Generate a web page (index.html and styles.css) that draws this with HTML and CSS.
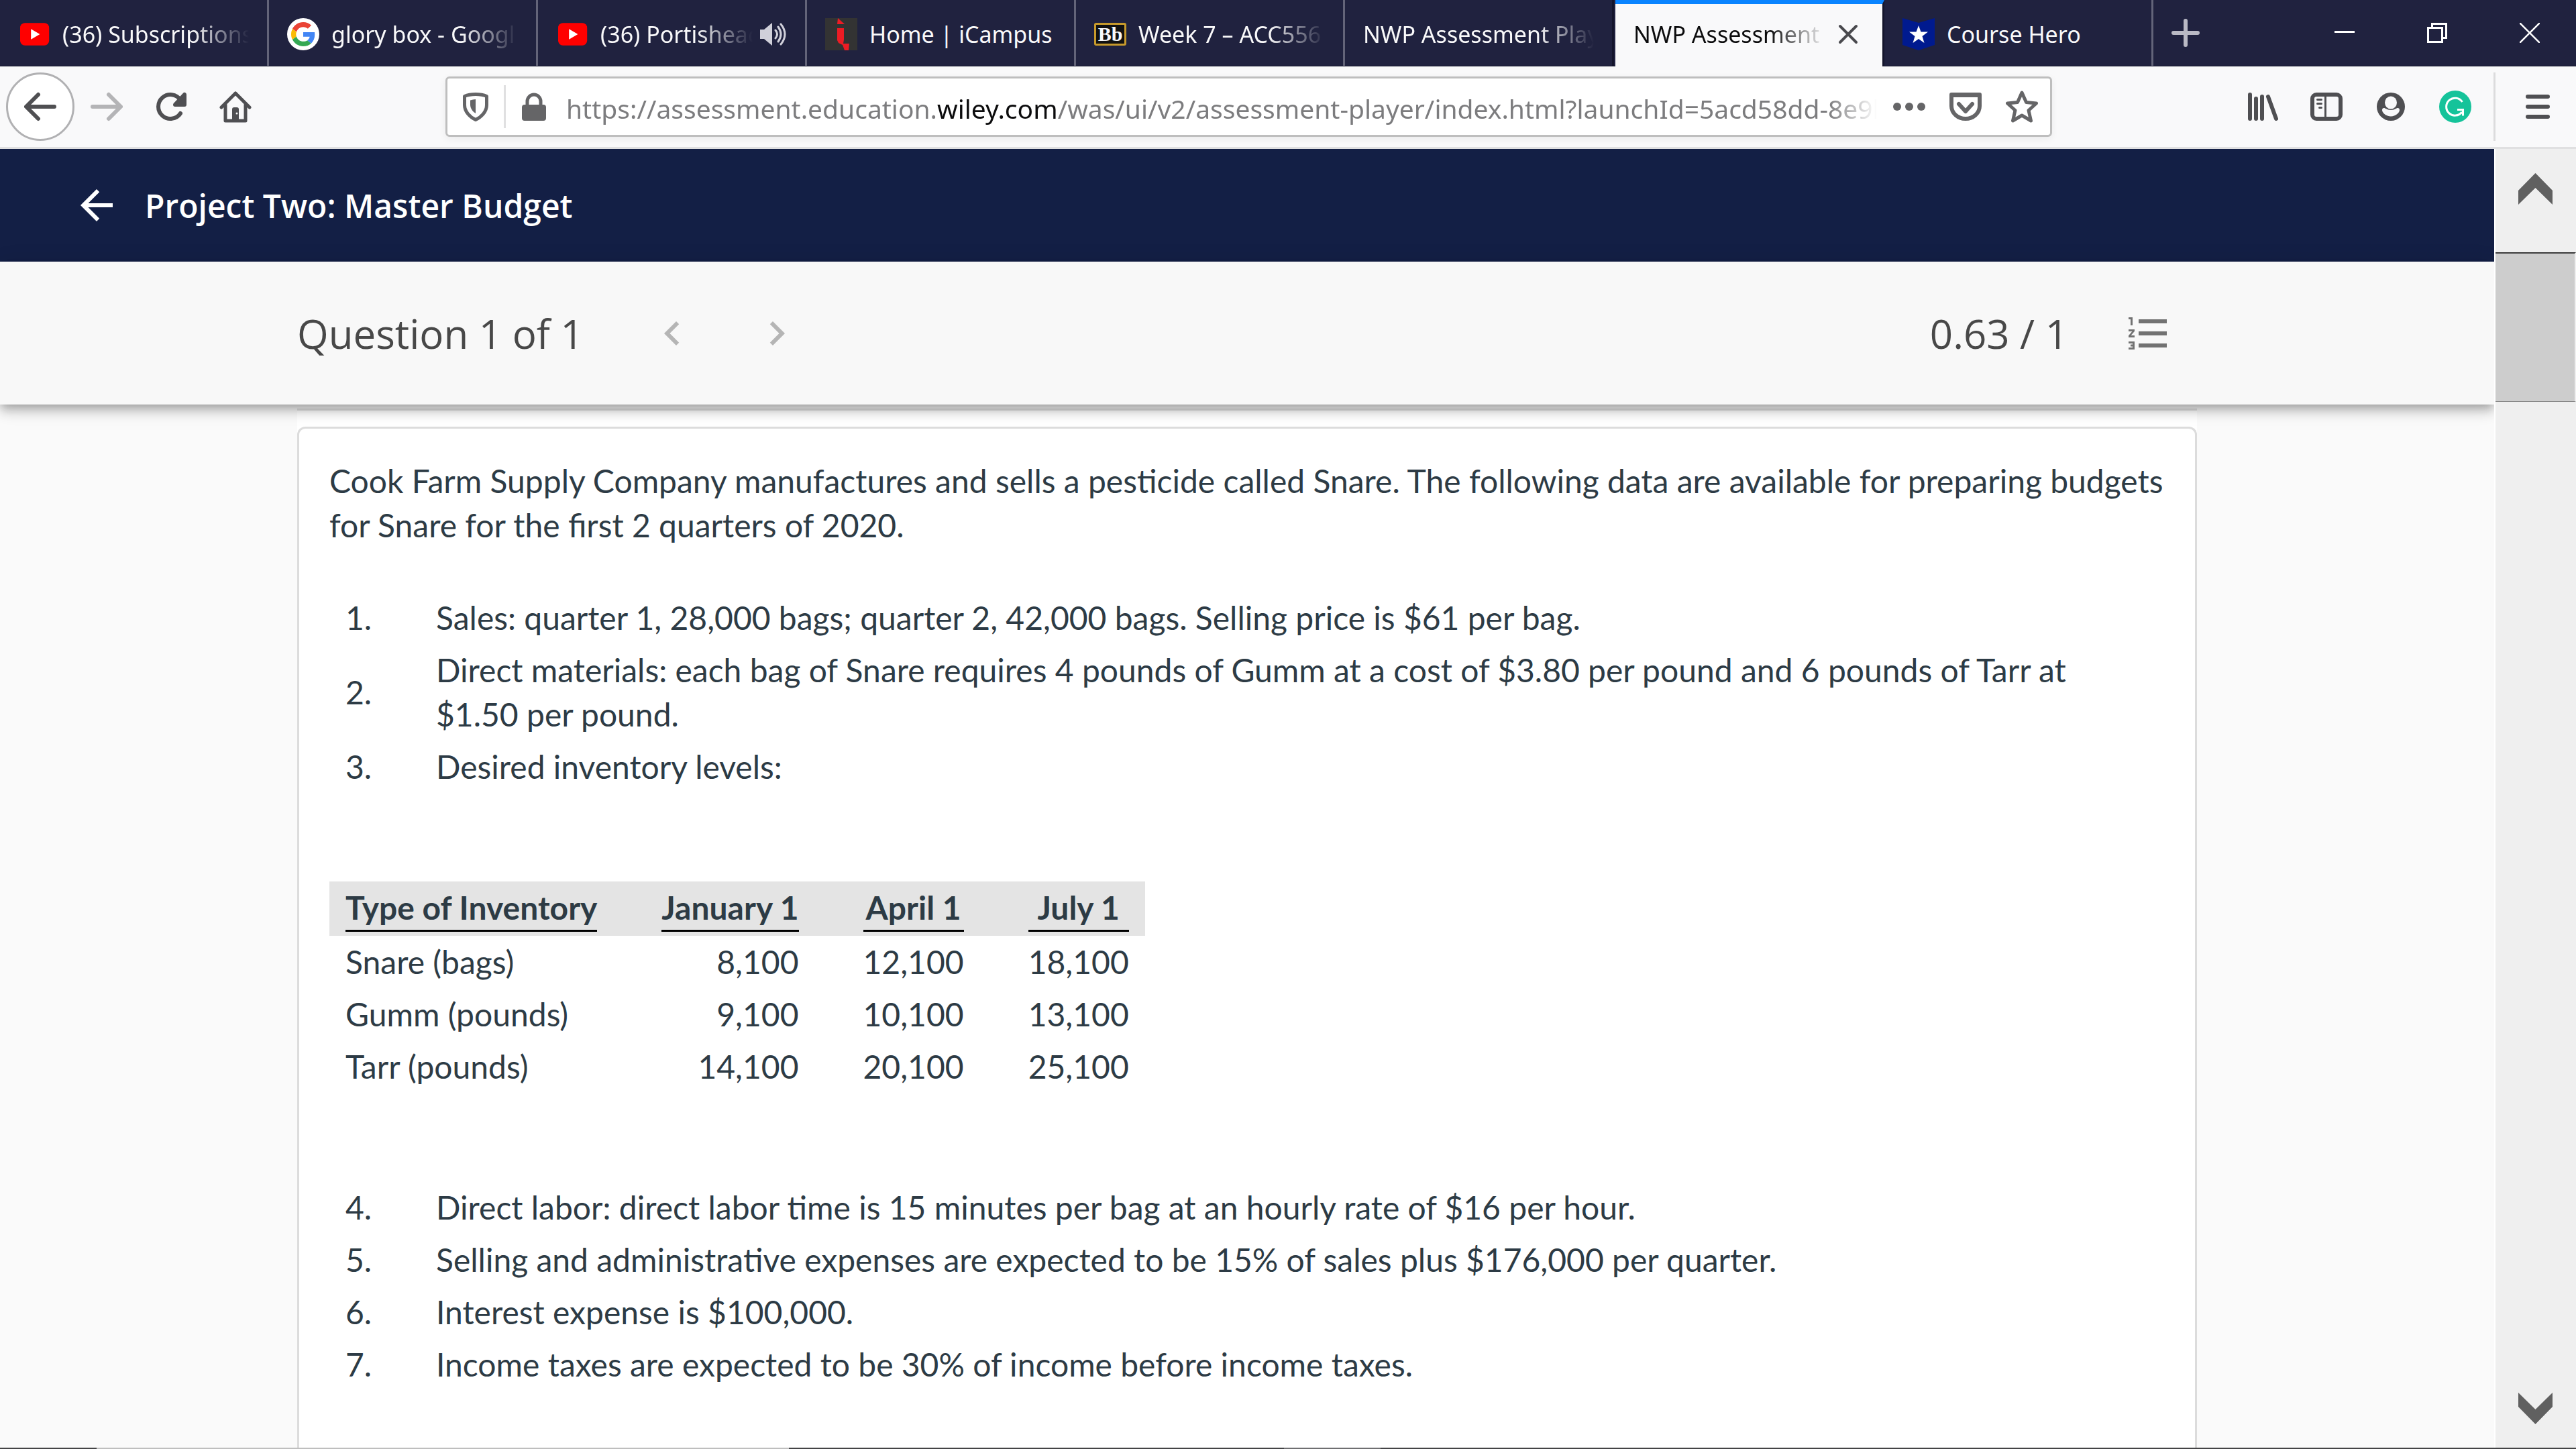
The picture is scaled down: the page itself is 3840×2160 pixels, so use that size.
FILE: index.html
```html
<!DOCTYPE html>
<html lang="en">
<head>
<meta charset="utf-8">
<title>NWP Assessment Player</title>
<meta name="viewport" content="width=device-width, initial-scale=1">
<link rel="stylesheet" href="styles.css">
</head>
<body>
<div class="window">
  <div class="tabstrip">
    <div class="tab">
      <button class="tab-select" type="button">
        <svg class="favicon" viewBox="0 0 16 16" aria-hidden="true"><rect x="1" y="2.4" width="14.4" height="11.2" rx="2.4" fill="#f00"/><path d="M6.4 5.4v5.2L10.8 8z" fill="#fff"/></svg>
        <span class="tab-label">(36) Subscriptions</span>
      </button>
    </div>
    <div class="tab">
      <button class="tab-select" type="button">
        <svg class="favicon" viewBox="0 0 48 48" aria-hidden="true"><circle cx="24" cy="24" r="24" fill="#fff"/><g transform="translate(6 6) scale(.75)"><path fill="#EA4335" d="M24 9.5c3.54 0 6.71 1.22 9.21 3.6l6.85-6.85C35.9 2.38 30.47 0 24 0 14.62 0 6.51 5.38 2.56 13.22l7.98 6.19C12.43 13.72 17.74 9.5 24 9.5z"/><path fill="#4285F4" d="M46.98 24.55c0-1.57-.15-3.09-.38-4.55H24v9.02h12.94c-.58 2.96-2.26 5.48-4.78 7.18l7.73 6c4.51-4.18 7.09-10.36 7.09-17.65z"/><path fill="#FBBC05" d="M10.53 28.59c-.48-1.45-.76-2.99-.76-4.59s.27-3.14.76-4.59l-7.98-6.19C.92 16.46 0 20.12 0 24c0 3.88.92 7.54 2.56 10.78l7.97-6.19z"/><path fill="#34A853" d="M24 48c6.48 0 11.93-2.13 15.89-5.81l-7.73-6c-2.15 1.45-4.92 2.3-8.16 2.3-6.26 0-11.57-4.22-13.47-9.91l-7.98 6.19C6.51 42.62 14.62 48 24 48z"/></g></svg>
        <span class="tab-label">glory box - Googl</span>
      </button>
    </div>
    <div class="tab">
      <button class="tab-select" type="button">
        <svg class="favicon" viewBox="0 0 16 16" aria-hidden="true"><rect x="1" y="2.4" width="14.4" height="11.2" rx="2.4" fill="#f00"/><path d="M6.4 5.4v5.2L10.8 8z" fill="#fff"/></svg>
        <span class="tab-label">(36) Portishead</span>
      </button>
      <button class="tab-sound" type="button" aria-label="Mute tab"><svg class="icon-sound" viewBox="0 0 42 36" fill="none" stroke="#d0d0da" stroke-width="3" stroke-linecap="round"><path d="M2 11h6L20 1v34L8 25H2z" fill="#d0d0da" stroke="none"/><path d="M25 12q5 6 0 12M29 7q8 11 0 22M33 3q12 15 0 30"/></svg></button>
    </div>
    <div class="tab">
      <button class="tab-select" type="button">
        <svg class="favicon" viewBox="0 0 48 48" aria-hidden="true"><path fill="#333" d="M0 0h48v48H0z"/><path fill="#ed1c24" d="M19 0l10 9H18zM18 15h10v17l-1 6h9l-1 10h-6l-3-8-6-3-2-4z"/></svg>
        <span class="tab-label tab-label-full">Home | iCampus</span>
      </button>
    </div>
    <div class="tab">
      <button class="tab-select" type="button">
        <span class="favicon favicon-bb">Bb</span>
        <span class="tab-label">Week 7 – ACC556</span>
      </button>
    </div>
    <div class="tab tab-last-before">
      <button class="tab-select" type="button"><span class="tab-label">NWP Assessment Play</span></button>
    </div>
    <div class="tab tab-active">
      <button class="tab-select" type="button"><span class="tab-label">NWP Assessment</span></button>
      <button class="tab-close" type="button" aria-label="Close tab"><svg class="icon-close" viewBox="0 0 30 30" stroke="#4a4a4e" stroke-width="4" stroke-linecap="round"><path d="M3 3l24 24M27 3L3 27"/></svg></button>
    </div>
    <div class="tab">
      <button class="tab-select" type="button">
        <svg class="favicon" viewBox="0 0 48 48" aria-hidden="true"><path fill="#001a8f" d="M0 0l24 7 24-7v40l-24 8-24-8z"/><path fill="#fff" d="M24 11l3.500 9.500H38l-8.500 6.500 3 10-8.500-6-8.500 6 3-10L10 20.500h10.500z"/></svg>
        <span class="tab-label tab-label-full">Course Hero</span>
      </button>
    </div>
    <button class="new-tab" type="button" aria-label="New tab"><svg class="icon-plus" viewBox="0 0 42 42" stroke="#b9b9c4" stroke-width="6" stroke-linecap="round"><path d="M21 3v36M3 21h36"/></svg></button>
    <div class="window-controls">
      <button type="button" aria-label="Minimize"><svg viewBox="0 0 30 30"><path fill="#fff" d="M0 12h30v3H0z"/></svg></button>
      <button type="button" aria-label="Restore"><svg viewBox="0 0 30 30" fill="none" stroke="#fff" stroke-width="3"><path d="M1.500 7.500h21v21h-21zM7.500 7V1.500h21v21H23"/></svg></button>
      <button type="button" aria-label="Close"><svg viewBox="0 0 30 30" stroke="#fff" stroke-width="2.500"><path d="M0 0l30 30M30 0L0 30"/></svg></button>
    </div>
  </div>

  <div class="toolbar">
    <div class="nav-buttons">
      <button class="nav-back" type="button" aria-label="Back"><svg class="icon" viewBox="0 0 48 48" fill="none" stroke="#4f4f52" stroke-width="6" stroke-linecap="round" stroke-linejoin="round"><path d="M45 24H4M21 6L3 24l18 18"/></svg></button>
      <button type="button" aria-label="Forward"><svg class="icon" viewBox="0 0 48 48" fill="none" stroke="#b4b4b6" stroke-width="6" stroke-linecap="round" stroke-linejoin="round"><path d="M3 24h41M27 6l18 18-18 18"/></svg></button>
      <button type="button" aria-label="Reload"><svg class="icon" viewBox="0 0 48 48" fill="none" stroke="#4f4f52" stroke-width="6" stroke-linecap="round"><path d="M38 34A18 18 0 1 1 38 14"/><path d="M44 6v15H30z" fill="#4f4f52" stroke-linejoin="round"/></svg></button>
      <button type="button" aria-label="Home"><svg class="icon" viewBox="0 0 48 48" fill="none" stroke="#4f4f52" stroke-width="5" stroke-linecap="round" stroke-linejoin="round"><path d="M3 25L24 4l21 21M9 21v24h30V21"/><path d="M19 45V28q0-3 3-3h4q3 0 3 3v17z" fill="#4f4f52" stroke="none"/><circle cx="26" cy="34" r="1.500" fill="#f9f9fa" stroke="none"/></svg></button>
    </div>
    <div class="urlbar">
      <button class="url-icon" type="button" aria-label="Tracking protection"><svg class="icon" viewBox="0 0 48 48" fill="none" stroke="#656567" stroke-width="5"><path d="M24 5.500c6 0 12 1 16.500 3v13c0 10-8 18-16.500 22C15.500 39.500 7.500 31.500 7.500 21.500v-13c4.500-2 10.500-3 16.500-3z" stroke-linejoin="round"/><path d="M24 13v21c-5-3-8-8-8-13v-6.500q4-1.500 8-1.500z" fill="#656567" stroke="none"/></svg></button>
      <span class="url-divider"></span>
      <button class="url-icon" type="button" aria-label="Site information"><svg class="icon" viewBox="0 0 48 48"><rect x="6" y="21" width="36" height="24" rx="4" fill="#656567"/><path d="M14 24v-8a10 10 0 0 1 20 0v8" fill="none" stroke="#656567" stroke-width="5"/></svg></button>
      <div class="url-text" role="textbox" aria-label="Address" tabindex="0">https://assessment.education.<span class="url-domain">wiley.com</span>/was/ui/v2/assessment-player/index.html?launchId=5acd58dd-8e9b</div>
      <div class="url-actions">
        <button type="button" aria-label="Page actions"><svg class="icon" viewBox="0 0 48 48" fill="#656567"><circle cx="6" cy="24" r="6"/><circle cx="24" cy="24" r="6"/><circle cx="42" cy="24" r="6"/></svg></button>
        <button type="button" aria-label="Save to Pocket"><svg class="icon" viewBox="0 0 48 48" fill="none" stroke="#656567" stroke-width="6" stroke-linecap="round" stroke-linejoin="round"><path d="M3 6h42v17a21 19 0 0 1-42 0zM3 7h42"/><path d="M14 20l10 11 10-11"/></svg></button>
        <button type="button" aria-label="Bookmark"><svg class="icon" viewBox="0 0 48 48" fill="none" stroke="#656567" stroke-width="5" stroke-linejoin="round"><path d="M24 3l6.500 14.500L45.500 19 34 29.500 37.500 45 24 37 10.500 45 14 29.500 2.500 19l15-1.500z"/></svg></button>
      </div>
    </div>
    <div class="tool-buttons">
      <button type="button" aria-label="Library"><svg class="icon" viewBox="0 0 48 48" stroke="#4f4f52" stroke-width="6" stroke-linecap="round"><path d="M6 6v36M15 12v30M24 9v33M33 9l12 33"/></svg></button>
      <button type="button" aria-label="Sidebars"><svg class="icon" viewBox="0 0 48 48" fill="none" stroke="#4f4f52" stroke-width="6" stroke-linejoin="round"><rect x="3" y="6" width="42" height="36" rx="6"/><path d="M22.500 6v36" stroke-width="3"/><path d="M10.500 13.500h6M10.500 19.500h6M13.500 25.500h3" stroke-width="3" stroke-linecap="round"/></svg></button>
      <button type="button" aria-label="Account"><svg class="icon" viewBox="0 0 48 48"><circle cx="24" cy="24" r="21" fill="#4f4f52"/><ellipse cx="24" cy="18" rx="9" ry="9.500" fill="#f9f9fa"/><path fill="#f9f9fa" d="M11 29c0-2.500 2-3.500 4.500-2.500q8.500 5 17 0c2.500-1 4.500 0 4.500 2.500 0 4-6 9.500-13 9.500S11 33 11 29z"/></svg></button>
      <button type="button" aria-label="Grammarly"><svg class="icon" viewBox="0 0 48 48"><circle cx="24" cy="24" r="24" fill="#15c39a"/><path d="M34.500 17A13 13 0 1 0 34 32M27 28.500h8.500v9" fill="none" stroke="#fff" stroke-width="3"/></svg></button>
    </div>
    <button class="menu-button" type="button" aria-label="Open menu"><svg class="icon" viewBox="0 0 48 48" stroke="#4f4f52" stroke-width="6" stroke-linecap="round"><path d="M9 9h30M9 24h30M9 39h30"/></svg></button>
  </div>

  <div class="viewport">
    <div class="page">
      <header class="app-header">
        <a class="back-link" href="#" aria-label="Back to assignments"><svg class="icon-md" viewBox="0 0 24 24" fill="#fff"><path d="M20 11H7.830l5.590-5.590L12 4l-8 8 8 8 1.410-1.410L7.830 13H20z"/></svg></a>
        <h1>Project Two: Master Budget</h1>
      </header>
      <div class="question-bar">
        <div class="question-inner">
          <h2>Question 1 of 1</h2>
          <div class="pager">
            <button type="button" aria-label="Previous question"><svg class="icon-md" viewBox="0 0 24 24" fill="#b5b5b5"><path d="M15.410 7.410L14 6l-6 6 6 6 1.410-1.410L10.830 12z"/></svg></button>
            <button type="button" aria-label="Next question"><svg class="icon-md" viewBox="0 0 24 24" fill="#b5b5b5"><path d="M10 6L8.590 7.410 13.170 12l-4.580 4.590L10 18l6-6z"/></svg></button>
          </div>
          <span class="score">0.63 / 1</span>
          <button class="list-button" type="button" aria-label="Question list"><svg class="icon-md" viewBox="0 0 24 24" fill="#727272"><path d="M2 17h2v.5H3v1h1v.5H2v1h3v-4H2v1zm1-9h1V4H2v1h1v3zm-1 3h1.800L2 13.100v.9h3v-1H3.200L5 10.900V10H2v1zm5-6v2h14V5H7zm0 14h14v-2H7v2zm0-6h14v-2H7v2z"/></svg></button>
        </div>
      </div>
      <main class="sheet">
        <article class="card">
          <p>Cook Farm Supply Company manufactures and sells a pesticide called Snare. The following data are available for preparing budgets for Snare for the first 2 quarters of 2020.</p>
          <ol class="facts">
            <li><span>1.</span><span>Sales: quarter 1, 28,000 bags; quarter 2, 42,000 bags. Selling price is $61 per bag.</span></li>
            <li><span>2.</span><span>Direct materials: each bag of Snare requires 4 pounds of Gumm at a cost of $3.80 per pound and 6 pounds of Tarr at $1.50 per pound.</span></li>
            <li><span>3.</span><span>Desired inventory levels:</span></li>
          </ol>
          <table class="inventory">
            <thead>
              <tr><th scope="col"><span>Type of Inventory</span></th><th scope="col"><span>January 1</span></th><th scope="col"><span>April 1</span></th><th scope="col"><span>July 1</span></th></tr>
            </thead>
            <tbody>
              <tr><td>Snare (bags)</td><td>8,100</td><td>12,100</td><td>18,100</td></tr>
              <tr><td>Gumm (pounds)</td><td>9,100</td><td>10,100</td><td>13,100</td></tr>
              <tr><td>Tarr (pounds)</td><td>14,100</td><td>20,100</td><td>25,100</td></tr>
            </tbody>
          </table>
          <ol class="facts" start="4">
            <li><span>4.</span><span>Direct labor: direct labor time is 15 minutes per bag at an hourly rate of $16 per hour.</span></li>
            <li><span>5.</span><span>Selling and administrative expenses are expected to be 15% of sales plus $176,000 per quarter.</span></li>
            <li><span>6.</span><span>Interest expense is $100,000.</span></li>
            <li><span>7.</span><span>Income taxes are expected to be 30% of income before income taxes.</span></li>
          </ol>
        </article>
      </main>
    </div>
    <div class="scrollbar">
      <button class="scroll-up" type="button" aria-label="Scroll up"><svg class="icon-scroll" viewBox="0 0 51 47"><path fill="#606060" d="M0 26L25.500 0 51 26v21L25.500 22 0 47z"/></svg></button>
      <div class="scroll-thumb"></div>
      <button class="scroll-down" type="button" aria-label="Scroll down"><svg class="icon-scroll" viewBox="0 0 51 47"><path fill="#606060" d="M0 21l25.500 26L51 21V0L25.500 25 0 0z"/></svg></button>
    </div>
  </div>
  <div class="taskbar-edge"></div>
</div>
</body>
</html>
```
FILE: styles.css
```css
* {
  box-sizing: border-box;
}

body {
  margin: 0;
  font-family: "Open Sans", "Noto Sans", sans-serif;
}

button {
  display: flex;
  align-items: center;
  justify-content: center;
  padding: 0;
  border: 0;
  background: none;
  color: inherit;
  font: inherit;
}

svg {
  display: block;
  flex: none;
}

.window {
  display: flex;
  flex-direction: column;
  height: 100vh;
  overflow: hidden;
}

.icon {
  width: 48px;
  height: 48px;
}

.icon-md {
  width: 72px;
  height: 72px;
}

/* Tab strip */
.tabstrip {
  display: flex;
  flex: none;
  height: 99px;
  background: #20223f;
  border-bottom: 1px solid #14152c;
  color: #f9f9fa;
  font-family: "Noto Sans", sans-serif;
  font-size: 34px;
}

.tab {
  display: flex;
  flex: 0 1 401px;
  gap: 9px;
  min-width: 0;
  padding: 4px 27px 0;
  border-right: 3px solid #636479;
}

.tab-select {
  flex: 1;
  gap: 18px;
  min-width: 0;
  justify-content: flex-start;
}

.favicon {
  flex: none;
  width: 48px;
  height: 48px;
}

.favicon-bb {
  height: 34px;
  border: 3px solid #c79a2c;
  border-radius: 3px;
  background: #111;
  font-family: "Liberation Serif", serif;
  font-size: 30px;
  font-weight: 700;
  line-height: 28px;
  text-align: center;
}

.tab-label {
  flex: 1;
  overflow: hidden;
  text-align: left;
  white-space: nowrap;
  -webkit-mask-image: linear-gradient(to left, transparent, #000 84px);
  mask-image: linear-gradient(to left, transparent, #000 84px);
}

.tab-label-full {
  -webkit-mask-image: none;
  mask-image: none;
}

.icon-sound {
  width: 42px;
  height: 36px;
}

.tab-last-before {
  border-right-color: #14152c;
}

.tab-active {
  height: 99px;
  margin-left: 2px;
  padding-top: 0;
  padding-bottom: 3px;
  border-top: 6px solid #0a84ff;
  border-right-color: #14152c;
  background: #f9f9fa;
  background-clip: padding-box;
  color: #0c0c0d;
}

.tab-close {
  width: 48px;
}

.icon-close {
  width: 30px;
  height: 30px;
}

.new-tab {
  width: 96px;
}

.icon-plus {
  width: 42px;
  height: 42px;
}

.window-controls {
  display: flex;
  margin-left: auto;
}

.window-controls button {
  width: 138px;
}

.window-controls svg {
  width: 30px;
  height: 30px;
}

/* Navigation toolbar */
.toolbar {
  display: flex;
  flex: none;
  align-items: center;
  height: 123px;
  border-bottom: 3px solid #e0e0e1;
  background: #f9f9fa;
}

.nav-buttons {
  display: flex;
  flex: none;
  align-items: center;
  gap: 48px;
  width: 664px;
  padding-left: 9px;
}

.nav-back {
  width: 102px;
  height: 102px;
  margin-right: -24px;
  border: 3px solid #b1b1b3;
  border-radius: 50%;
  background: #fff;
}

.urlbar {
  display: flex;
  flex: 1;
  align-items: center;
  min-width: 0;
  height: 90px;
  padding: 0 18px;
  border: 3px solid #bebebe;
  border-radius: 6px;
  background: #fff;
  box-shadow: 0 3px 12px rgba(0, 0, 0, .06);
}

.url-divider {
  width: 3px;
  height: 64px;
  margin: 0 18px;
  background: #e0e0e1;
}

.url-text {
  flex: 1;
  min-width: 0;
  margin: 0 24px;
  padding-top: 4px;
  overflow: hidden;
  color: #7c7c7e;
  font-family: "Noto Sans", sans-serif;
  font-size: 39px;
  white-space: nowrap;
  -webkit-mask-image: linear-gradient(to left, transparent, #000 72px);
  mask-image: linear-gradient(to left, transparent, #000 72px);
}

.url-domain {
  color: #0c0c0d;
}

.url-actions {
  display: flex;
  gap: 36px;
}

.tool-buttons {
  display: flex;
  gap: 48px;
  margin-left: 289px;
}

.menu-button {
  width: 123px;
  height: 102px;
  margin-left: 33px;
  padding-left: 6px;
  border-left: 3px solid #dcdcdd;
}

/* Page */
.viewport {
  display: flex;
  flex: 1;
  min-height: 0;
}

.page {
  display: flex;
  flex: 1;
  flex-direction: column;
  min-width: 0;
  overflow: hidden;
  background: #fafafa;
}

.app-header {
  display: flex;
  flex: none;
  align-items: center;
  gap: 36px;
  height: 168px;
  padding: 0 108px;
  background: #131f45;
  color: #fff;
}

.app-header h1 {
  margin: 0;
  font-size: 48px;
  font-weight: 600;
}

.question-bar {
  position: relative;
  flex: none;
  padding: 0 36px;
  background: #f8f8f8;
  box-shadow: 0 6px 12px -3px rgba(0, 0, 0, .2), 0 12px 15px rgba(0, 0, 0, .14), 0 3px 30px rgba(0, 0, 0, .12);
  color: #484848;
}

.question-inner {
  display: flex;
  align-items: center;
  max-width: 2832px;
  height: 213px;
  margin: 0 auto;
  padding-right: 36px;
  font-size: 60px;
}

.question-inner h2 {
  margin: 0;
  font-size: 60px;
  font-weight: 400;
}

.pager {
  display: flex;
  gap: 84px;
  margin-left: 96px;
}

.score {
  margin-left: auto;
}

.list-button {
  margin-left: 84px;
}

.sheet {
  display: flex;
  flex: 1;
  flex-direction: column;
  width: calc(100% - 72px);
  max-width: 2832px;
  min-height: 0;
  margin: 6px auto 0;
  padding-top: 24px;
  border-top: 3px solid #e0e0e0;
  background: #fff;
}

.card {
  flex: 1 0 auto;
  padding: 45px;
  border: 3px solid #dcdcdc;
  border-bottom: 0;
  border-radius: 12px 12px 0 0;
  background: #fff;
  color: #2d3b45;
  font-family: Lato, sans-serif;
  font-size: 48px;
  line-height: 66px;
  text-rendering: optimizeLegibility;
}

.card p {
  margin: 0 0 66px;
}

.facts {
  margin: 0;
  padding: 0 96px 0 24px;
  list-style: none;
}

.facts li {
  display: grid;
  grid-template-columns: 135px 1fr;
  align-items: center;
  padding: 6px 0;
}

.inventory {
  margin: 132px 0;
  border-collapse: collapse;
}

.inventory thead {
  background: #e4e4e4;
}

.inventory th,
.inventory td {
  padding: 6px 24px 6px 72px;
  text-align: right;
}

.inventory th:first-child,
.inventory td:first-child {
  padding-left: 24px;
  text-align: left;
}

.inventory th span {
  display: block;
  border-bottom: 3px solid #000;
  text-align: center;
}

/* Scrollbar */
.scrollbar {
  display: flex;
  flex: none;
  flex-direction: column;
  width: 122px;
  border-left: 2px solid #fff;
  background: #efefef;
}

.scroll-up {
  height: 154px;
  padding-right: 2px;
  padding-bottom: 36px;
}

.scroll-thumb {
  height: 223px;
  border-top: 2px solid #3c3c3c;
  border-right: 2px solid #efefef;
  border-bottom: 1px solid #888;
  background: #cdcdcd;
}

.scroll-down {
  height: 117px;
  margin-top: auto;
  padding-right: 2px;
}

.icon-scroll {
  width: 51px;
  height: 47px;
}

.taskbar-edge {
  flex: none;
  height: 2px;
  background: linear-gradient(to right, #444446 144px, #bebebe 144px, #bebebe 1176px, #444446 1176px, #444446 1914px, #6f6f71 1914px, #6f6f71 2058px, #444446 2058px);
}
```
